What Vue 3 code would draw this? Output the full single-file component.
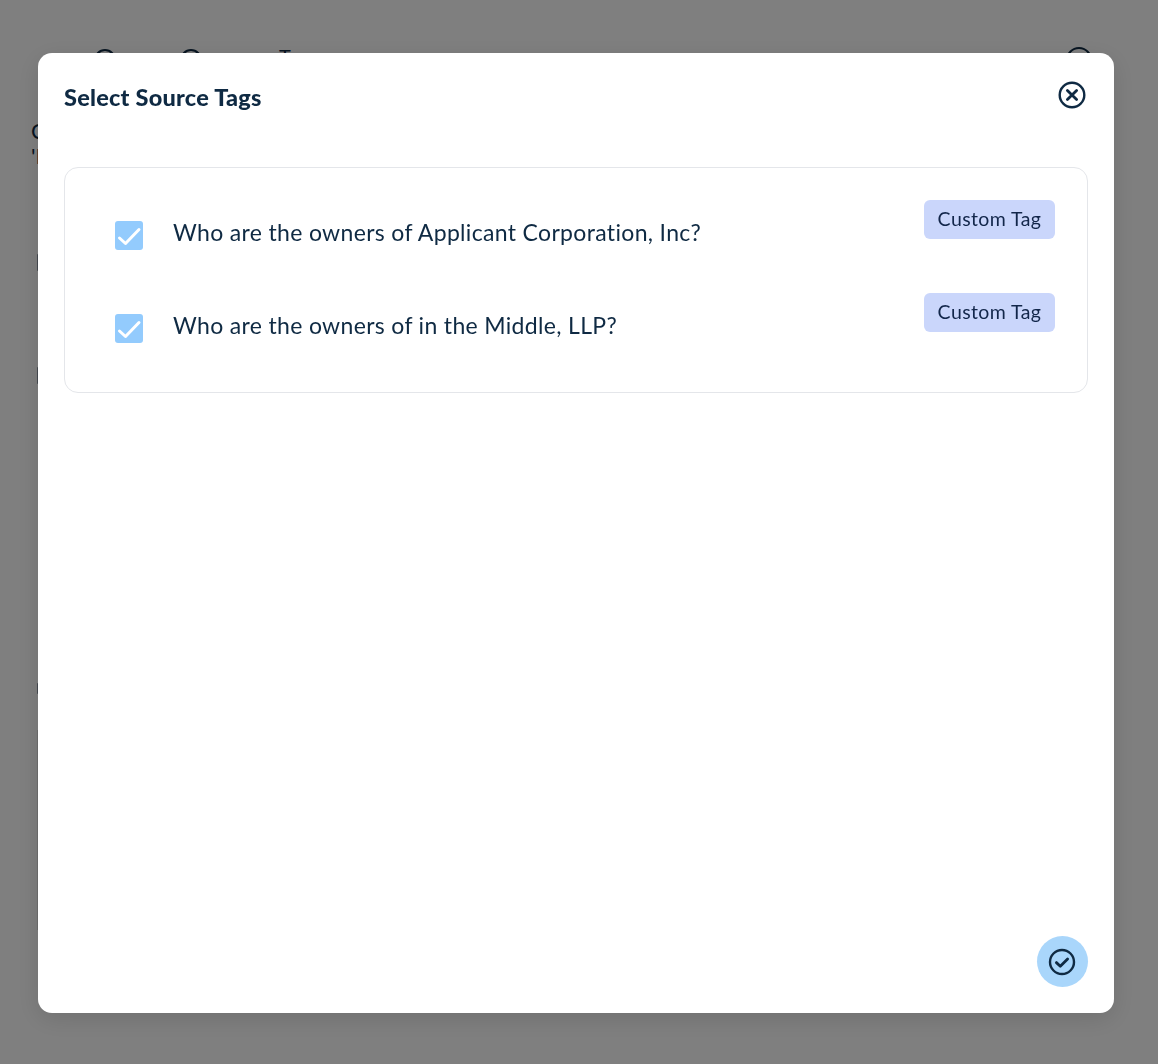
<script setup>
const questions = [
  { id: 1, text: 'Who are the owners of Applicant Corporation, Inc?', tag: 'Custom Tag' },
  { id: 2, text: 'Who are the owners of in the Middle, LLP?', tag: 'Custom Tag' }
]
</script>

<template>
  <div class="page">
    <div class="page-top">
      <span class="top-ring ring-a"></span>
      <span class="top-ring ring-b"></span>
      <span class="top-t">T</span>
      <span class="top-ring ring-c"></span>
    </div>
    <p class="page-text">Company<br>'Intro</p>
    <span class="page-mark mark-a"></span>
    <span class="page-mark mark-b"></span>
    <span class="page-mark mark-c"></span>
    <span class="page-rule"></span>
  </div>

  <div class="overlay">
    <div class="modal">
      <div class="modal-head">
        <h2>Select Source Tags</h2>
        <button class="close" aria-label="Close">
          <svg width="28" height="28" viewBox="0 0 28 28" fill="none" stroke="#0f2a43" stroke-width="2.4" stroke-linecap="round">
            <circle cx="14" cy="14" r="12.3" />
            <path d="M9.4 9.4l9.2 9.2M18.6 9.4l-9.2 9.2" stroke-width="2.8" />
          </svg>
        </button>
      </div>

      <div class="card">
        <div v-for="q in questions" :key="q.id" class="row">
          <label class="question">
            <span class="check">
              <svg width="28" height="29" viewBox="0 0 28 29" fill="none" stroke="#fff" stroke-width="3" stroke-linecap="round" stroke-linejoin="round">
                <path d="M4.5 17l6 5.5L24 8.5" />
              </svg>
            </span>
            <span class="label">{{ q.text }}</span>
          </label>
          <span class="tag">{{ q.tag }}</span>
        </div>
      </div>

      <div class="modal-foot">
        <button class="confirm" aria-label="Confirm">
          <svg width="28" height="28" viewBox="0 0 28 28" fill="none" stroke="#0f2a43" stroke-width="2.4" stroke-linecap="round" stroke-linejoin="round">
            <circle cx="14" cy="14" r="12" />
            <path d="M8.4 14.6l3.9 3.6 7.3-7.2" stroke-width="2.8" />
          </svg>
        </button>
      </div>
    </div>
  </div>
</template>

<style>
html, body {
  margin: 0;
  background: #fff;
}
</style>

<style scoped>
.page {
  height: 1064px;
  overflow: hidden;
  font-family: "Lato", sans-serif;
  color: #0f2a43;
  background: #fff;
  padding: 0 0 0 31px;
  box-sizing: border-box;
  position: relative;
}
.page-top {
  height: 70px;
}
.top-ring {
  position: absolute;
  top: 49px;
  width: 22px;
  height: 22px;
  border: 2px solid #0f2a43;
  border-radius: 50%;
  box-sizing: border-box;
}
.ring-a { left: 94px; }
.ring-b { left: 180px; }
.ring-c { left: 1066px; top: 47px; width: 26px; height: 26px; }
.top-t {
  position: absolute;
  left: 279px;
  top: 44px;
  font-size: 20px;
}
.page-text {
  margin: 48px 0 0;
  font-size: 22px;
  line-height: 25px;
}
.page-mark {
  position: absolute;
  left: 37px;
  width: 2px;
  height: 17px;
  background: #8a94a0;
  border-radius: 2px;
}
.mark-a { top: 254px; }
.mark-b { top: 367px; }
.mark-c { top: 683px; height: 11px; }
.page-rule {
  position: absolute;
  left: 37px;
  top: 730px;
  width: 1px;
  height: 200px;
  background: #ddd;
}

.overlay {
  position: fixed;
  inset: 0;
  background: rgba(0, 0, 0, 0.5);
  padding: 53px 44px 51px 38px;
  box-sizing: border-box;
  display: flex;
  font-family: "Lato", sans-serif;
  color: #0f2a43;
}
.modal {
  flex: 1;
  background: #fff;
  border-radius: 14px;
  box-shadow: 0 6px 24px rgba(0, 0, 0, 0.12);
  padding: 29px 26px 26px;
  display: flex;
  flex-direction: column;
}
.modal-head {
  display: flex;
  justify-content: space-between;
  align-items: flex-start;
  height: 85px;
}
.modal-head h2 {
  margin: 0;
  font-size: 23.5px;
  line-height: 30px;
  font-weight: 900;
  letter-spacing: 0.23px;
}
.close {
  background: none;
  border: none;
  padding: 0;
  margin: -1px 2px 0 0;
  height: 28px;
  display: block;
  cursor: pointer;
}
.card {
  border: 1px solid #e4e6ea;
  border-radius: 14px;
  height: 226px;
  box-sizing: border-box;
  padding: 32px 32px 0 50px;
}
.row {
  display: flex;
  justify-content: space-between;
  align-items: flex-start;
  height: 93px;
}
.question {
  display: flex;
  align-items: flex-start;
  gap: 30px;
  margin-top: 21px;
}
.check {
  width: 28px;
  height: 29px;
  background: #93cbfd;
  border-radius: 3px;
  display: block;
}
.check svg {
  display: block;
}
.label {
  font-size: 23px;
  line-height: 23px;
  letter-spacing: 0.33px;
}
.tag {
  width: 131px;
  height: 39px;
  padding-bottom: 2px;
  box-sizing: border-box;
  background: #cad6fb;
  border-radius: 6px;
  display: flex;
  align-items: center;
  justify-content: center;
  font-size: 19.5px;
  letter-spacing: 0.4px;
  color: #12264a;
}
.modal-foot {
  margin-top: auto;
  display: flex;
  justify-content: flex-end;
}
.confirm {
  width: 51px;
  height: 51px;
  border: none;
  border-radius: 50%;
  background: #a9d6fb;
  padding: 0 1px 0 0;
  display: flex;
  align-items: center;
  justify-content: center;
  cursor: pointer;
}
</style>
